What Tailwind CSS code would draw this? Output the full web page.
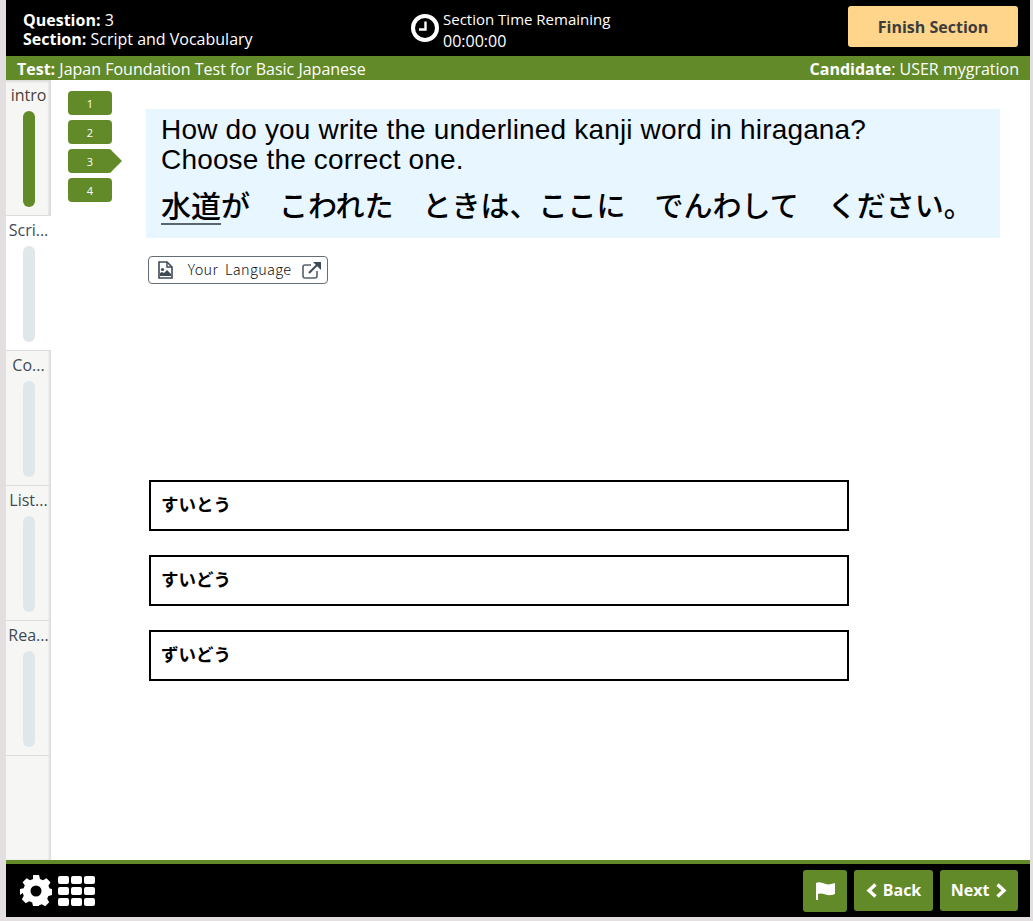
<!doctype html>
<html>
<head>
<meta charset="utf-8">
<script src="https://cdn.jsdelivr.net/npm/@tailwindcss/browser@4"></script>
</head>
<body class="m-0 bg-[#e3dfe0] font-['Open_Sans',sans-serif]">
<div class="w-[1033px] h-[921px] pl-[6px] pr-[3px] pb-[4px] flex flex-col overflow-hidden">
  <header class="h-[56px] shrink-0 bg-black text-white flex relative">
    <div class="pl-[17px] pt-[11px] text-[16px] leading-[19px] w-[405px]">
      <div><b class="font-bold">Question:</b> 3</div>
      <div><b class="font-bold">Section:</b> Script and Vocabulary</div>
    </div>
    <div class="flex items-start pt-[9px]">
      <svg class="w-[28px] h-[28px] mt-[5px]" viewBox="0 0 28 28"><circle cx="14" cy="14" r="12" fill="none" stroke="#fff" stroke-width="4"/><path d="M14.500 7.500V15.500H8" fill="none" stroke="#fff" stroke-width="2.400"/></svg>
      <div class="ml-[4px] text-[15px] leading-[21px]">
        <div>Section Time Remaining</div>
        <div class="text-[16px] mt-[1px]">00:00:00</div>
      </div>
    </div>
    <button class="absolute left-[842px] top-[6px] w-[170px] h-[41px] bg-[#fed58b] rounded-[3px] text-[#3c3c3c] font-bold text-[16px]">Finish Section</button>
  </header>
  <div class="h-[24px] shrink-0 bg-[#638a28] text-white text-[16px] leading-[26px] flex justify-between pl-[11px] pr-[11px]">
    <div><b class="font-bold">Test:</b> Japan Foundation Test for Basic Japanese</div>
    <div><b class="font-bold">Candidate</b>: USER mygration</div>
  </div>
  <div class="flex-1 flex min-h-0 bg-white">
    <aside class="w-[45px] shrink-0 bg-[#f6f6f4] text-[#3f4a55] text-[16px] shadow-[inset_-2px_0_2px_#dcdcdc] flex flex-col">
      <div class="h-[136px] pt-[5px] flex flex-col items-center border-b border-[#dcdcdc] shadow-[inset_-2px_2px_2px_#dcdcdc]">
        <div class="h-[21px] leading-[21px] text-[#4a3f3a]">intro</div>
        <div class="mt-[5px] w-[12px] h-[96px] rounded-full bg-[#638a28]"></div>
      </div>
      <div class="h-[135px] pt-[4px] flex flex-col items-center border-b border-[#dcdcdc] bg-white">
        <div class="h-[21px] leading-[21px]">Scri...</div>
        <div class="mt-[5px] w-[12px] h-[96px] rounded-full bg-[#e0e7ea]"></div>
      </div>
      <div class="h-[135px] pt-[4px] flex flex-col items-center border-b border-[#dcdcdc]">
        <div class="h-[21px] leading-[21px]">Co...</div>
        <div class="mt-[5px] w-[12px] h-[96px] rounded-full bg-[#e0e7ea]"></div>
      </div>
      <div class="h-[135px] pt-[4px] flex flex-col items-center border-b border-[#dcdcdc]">
        <div class="h-[21px] leading-[21px]">List...</div>
        <div class="mt-[5px] w-[12px] h-[96px] rounded-full bg-[#e0e7ea]"></div>
      </div>
      <div class="h-[135px] pt-[4px] flex flex-col items-center border-b border-[#dcdcdc]">
        <div class="h-[21px] leading-[21px]">Rea...</div>
        <div class="mt-[5px] w-[12px] h-[96px] rounded-full bg-[#e0e7ea]"></div>
      </div>
    </aside>
    <div class="w-[95px] shrink-0 pl-[17px] pt-[11px] flex flex-col gap-[5px] text-white text-[11px]">
      <div class="w-[44px] h-[24px] pt-[2px] rounded-[4px] bg-[#638a28] flex items-center justify-center">1</div>
      <div class="w-[44px] h-[24px] pt-[2px] rounded-[4px] bg-[#638a28] flex items-center justify-center">2</div>
      <div class="relative w-[44px] h-[24px] pt-[2px] rounded-[4px] bg-[#638a28] flex items-center justify-center">3
        <div class="absolute left-[42px] top-0 w-0 h-0 border-y-[12px] border-y-transparent border-l-[12px] border-l-[#638a28]"></div>
      </div>
      <div class="w-[44px] h-[24px] pt-[2px] rounded-[4px] bg-[#638a28] flex items-center justify-center">4</div>
    </div>
    <main class="flex-1 pt-[29px]">
      <div class="w-[854px] h-[129px] bg-[#e7f6ff] pl-[15px] pt-[6px] text-black font-['Liberation_Sans','Noto_Sans_CJK_JP',sans-serif]">
        <div class="text-[28px] leading-[30px] tracking-[0.17px]">How do you write the underlined kanji word in hiragana?<br>Choose the correct one.</div>
        <div class="text-[29px] leading-[40px] mt-[12px] font-medium whitespace-pre"><span class="text-[30px] underline underline-offset-[6px] decoration-[#5a6570] decoration-2">水道</span>が　こわれた　ときは、ここに　でんわして　ください。</div>
      </div>
      <button class="mt-[18px] ml-[2px] w-[180px] h-[28px] border border-[#666e75] rounded-[4px] flex items-center pl-[8px] pb-[1px] text-[#111] font-['Noto_Sans_CJK_JP',sans-serif] font-light text-[14.500px] whitespace-pre">
        <svg class="w-[17px] h-[18px] shrink-0" viewBox="1 0 15 18"><path d="M2 1h8l5 5v11H2V1z" fill="none" stroke="#3e4a56" stroke-width="1.600"/><path d="M10 1v5h5" fill="none" stroke="#3e4a56" stroke-width="1.400"/><circle cx="5.500" cy="8.500" r="1.600" fill="#3e4a56"/><path d="M3 15v-3l2-1 2 1 3-3 4 4v2z" fill="#3e4a56"/></svg>
        <span class="ml-[13px] w-[105px] pb-[2px] tracking-[0.3px]">Your  Language</span>
        <svg class="w-[20px] h-[18px] ml-[10px] shrink-0" viewBox="0 0 20 18"><path d="M15 10v5a2 2 0 0 1-2 2H3a2 2 0 0 1-2-2V6a2 2 0 0 1 2-2h6" fill="none" stroke="#55606a" stroke-width="1.600"/><path d="M7 12 17 2" stroke="#3e4a56" stroke-width="2"/><path d="M11 1h8v8z" fill="#3e4a56"/></svg>
      </button>
      <div class="mt-[196px] ml-[3px] flex flex-col gap-[24px] font-['Liberation_Sans','Noto_Sans_CJK_JP',sans-serif] text-[17.500px] font-bold text-black">
        <div class="w-[700px] h-[51px] border-2 border-black pl-[10px] flex items-center">すいとう</div>
        <div class="w-[700px] h-[51px] border-2 border-black pl-[10px] flex items-center">すいどう</div>
        <div class="w-[700px] h-[51px] border-2 border-black pl-[10px] flex items-center">ずいどう</div>
      </div>
    </main>
  </div>
  <footer class="h-[57px] shrink-0 bg-black border-t-[4px] border-[#638a28] flex items-center relative">
    <svg class="ml-[14px] w-[32px] h-[32px]" viewBox="0 0 32 32"><path fill="#fff" fill-rule="evenodd" d="M13 1h6l1 4 3 1.300 3.500-2.100 4 4L28.400 11.700 29.600 14.500 32 15v6l-3.600.9-1.200 2.900 2 3.400-4 4-3.500-2-2.900 1.200L19 32h-6l-.8-3.600-2.900-1.200-3.500 2-4-4 2-3.400-1.200-2.900L0 21v-6l3.600-.7 1.200-2.800L2.600 8.200l4-4L10 6.300 13 5z" transform="translate(0 -1)"/><circle cx="16" cy="16" r="5.500" fill="#000"/></svg>
    <div class="ml-[6px] mt-[1px] grid grid-cols-3 gap-x-[2px] gap-y-[3px]">
      <span class="w-[11px] h-[8px] rounded-[2px] bg-white"></span><span class="w-[11px] h-[8px] rounded-[2px] bg-white"></span><span class="w-[11px] h-[8px] rounded-[2px] bg-white"></span>
      <span class="w-[11px] h-[8px] rounded-[2px] bg-white"></span><span class="w-[11px] h-[8px] rounded-[2px] bg-white"></span><span class="w-[11px] h-[8px] rounded-[2px] bg-white"></span>
      <span class="w-[11px] h-[8px] rounded-[2px] bg-white"></span><span class="w-[11px] h-[8px] rounded-[2px] bg-white"></span><span class="w-[11px] h-[8px] rounded-[2px] bg-white"></span>
    </div>
    <div class="absolute left-[797px] top-[6px] flex gap-[7px] text-white font-bold text-[16px]">
      <button class="w-[44px] h-[42px] bg-[#638a28] rounded-[3px] flex items-center justify-center">
        <svg class="w-[21px] h-[19px]" viewBox="0 0 21 19"><path fill="#fff" d="M1 1c3-1.500 6 0 9.500 1S16 2 20 1v11c-4 1.500-6 1.500-9.500.5S5 11 3 12v6H1z"/></svg>
      </button>
      <button class="w-[79px] h-[41px] pb-[2px] bg-[#638a28] rounded-[3px] flex items-center justify-center gap-[6px]">
        <svg class="w-[11px] h-[15px] mt-[2px]" viewBox="0 0 11 15"><path d="M9.500 1.500 3 7.500l6.500 6" fill="none" stroke="#fff" stroke-width="3.400"/></svg>Back
      </button>
      <button class="w-[78px] h-[41px] pb-[2px] bg-[#638a28] rounded-[3px] flex items-center justify-center gap-[7px]">Next
        <svg class="w-[11px] h-[15px] mt-[2px]" viewBox="0 0 11 15"><path d="M1.500 1.500 8 7.500l-6.500 6" fill="none" stroke="#fff" stroke-width="3.400"/></svg>
      </button>
    </div>
  </footer>
</div>
</body>
</html>
